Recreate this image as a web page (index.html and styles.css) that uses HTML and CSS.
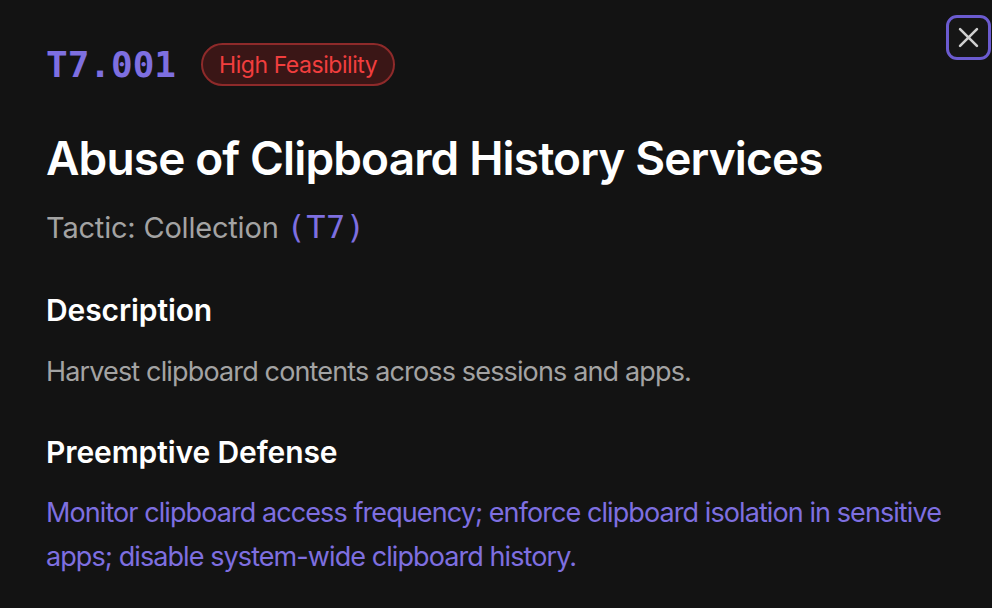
FILE: index.html
```html
<!DOCTYPE html>
<html lang="en">
<head>
<meta charset="utf-8">
<title>T7.001 Abuse of Clipboard History Services</title>
<link rel="stylesheet" href="styles.css">
</head>
<body>
<div class="panel">
  <button class="close" aria-label="Close">
    <svg viewBox="0 0 24 24" width="27" height="27"><path d="M4.5 4.5 L19.5 19.5 M19.5 4.5 L4.5 19.5" stroke="#d0d0d0" stroke-width="2.3" stroke-linecap="round" fill="none"/></svg>
  </button>
  <div class="header">
    <span class="code">T7.001</span>
    <span class="badge">High Feasibility</span>
  </div>
  <h1 class="title">Abuse of Clipboard History Services</h1>
  <p class="tactic">Tactic: Collection <span class="tcode">(T7)</span></p>
  <h2 class="heading first">Description</h2>
  <p class="desc">Harvest clipboard contents across sessions and apps.</p>
  <h2 class="heading">Preemptive Defense</h2>
  <p class="defense">Monitor clipboard access frequency; enforce clipboard isolation in sensitive apps; disable system-wide clipboard history.</p>
</div>
</body>
</html>
```
FILE: styles.css
```css
html, body {
  margin: 0;
  padding: 0;
  background: #131313;
}
body {
  font-family: Inter, "Noto Sans", "Liberation Sans", sans-serif;
  width: 992px;
  height: 608px;
  overflow: hidden;
}
.panel {
  position: relative;
  padding: 43px 40px 0 46px;
}
.close {
  position: absolute;
  top: 15px;
  right: 1px;
  width: 45px;
  height: 45px;
  box-sizing: border-box;
  border: 3px solid #6b5bd0;
  border-radius: 11px;
  background: #161616;
  display: flex;
  align-items: center;
  justify-content: center;
  padding: 0;
}
.header {
  display: flex;
  align-items: center;
  gap: 25px;
  height: 43px;
}
.code {
  font-family: "DejaVu Sans Mono", "Liberation Mono", monospace;
  font-weight: 700;
  font-size: 36px;
  color: #7e6fe0;
  line-height: 43px;
}
.badge {
  box-sizing: border-box;
  height: 43px;
  display: flex;
  align-items: center;
  padding: 0 16px;
  border: 2px solid #8e2a2a;
  border-radius: 22px;
  background: #3a1616;
  color: #f23e3e;
  font-size: 23px;
  letter-spacing: -0.45px;
}
.title {
  margin: 44px 0 0;
  font-size: 46px;
  line-height: 56px;
  font-weight: 600;
  color: #ffffff;
  letter-spacing: -0.87px;
}
.tactic {
  margin: 21px 0 0;
  font-size: 29px;
  line-height: 40px;
  color: #a3a3a3;
  letter-spacing: -0.2px;
}
.tcode {
  font-family: "DejaVu Sans Mono", "Liberation Mono", monospace;
  color: #7e6fe0;
  font-size: 32px;
  letter-spacing: 0.5px;
}
.heading {
  margin: 38px 0 0;
  font-size: 30px;
  line-height: 40px;
  font-weight: 600;
  color: #ffffff;
  letter-spacing: -0.1px;
}
.heading.first {
  margin-top: 42px;
}
.desc {
  margin: 20px 0 0;
  font-size: 27px;
  line-height: 44px;
  color: #a3a3a3;
  letter-spacing: -0.85px;
}
.defense {
  margin: 19px 0 0;
  font-size: 27px;
  line-height: 44px;
  color: #7e6fe0;
  letter-spacing: -0.92px;
}
```
